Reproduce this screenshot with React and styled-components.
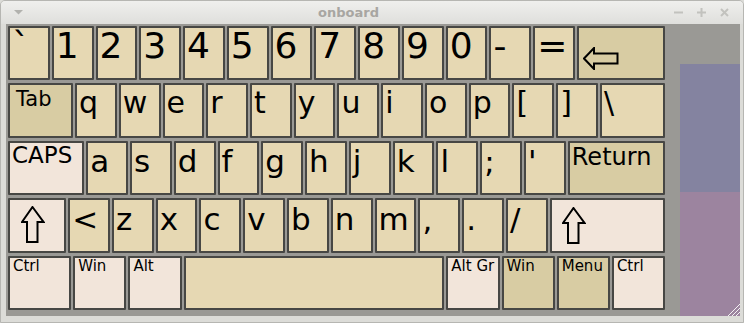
import React from "react";
import styled, { createGlobalStyle } from "styled-components";

const GlobalStyle = createGlobalStyle`
  html, body {
    margin: 0;
    padding: 0;
    background: #dcdcd8;
  }
`;

const tones = {
  base: "#e6d8b3",
  dark: "#d8cca3",
  light: "#f2e5da",
};

const Window = styled.div`
  box-sizing: border-box;
  width: 744px;
  height: 323px;
  display: flex;
  flex-direction: column;
  background: #dcdcd8;
  border: 1px solid #b6b6b2;
  border-radius: 5px 5px 0 0;
  padding: 0 3px 6px 5px;
  font-family: "DejaVu Sans", "Liberation Sans", sans-serif;
  overflow: hidden;
`;

const TitleBar = styled.div`
  height: 23px;
  margin: 0 -3px 0 -5px;
  display: flex;
  align-items: center;
  background: linear-gradient(#efefed, #dfdfdc);
`;

const MenuArea = styled.div`
  width: 37px;
  display: flex;
  align-items: center;
  padding-left: 13px;
  box-sizing: border-box;
`;

const Title = styled.div`
  flex: 1;
  text-align: center;
  font-weight: bold;
  font-size: 13px;
  color: #a8a6a2;
  padding-bottom: 1px;
`;

const Buttons = styled.div`
  width: 84px;
  display: flex;
  align-items: center;
  gap: 14px;
  padding-left: 15px;
  box-sizing: border-box;
`;

const Body = styled.div`
  flex: 1;
  display: flex;
  background: #9a9995;
`;

const Keyboard = styled.div`
  width: 657px;
  margin: 2px 0 6px 2px;
  display: flex;
  flex-direction: column;
  gap: 3px;
`;

const Row = styled.div`
  flex: 1;
  display: flex;
  gap: 2px;
`;

const Key = styled.div`
  flex: ${(p) => p.$w} ${(p) => p.$w} ${(p) => p.$w}px;
  min-width: 0;
  box-sizing: border-box;
  border: 2px solid #474744;
  border-radius: 1px;
  background: ${(p) => tones[p.$tone]};
  padding: ${(p) => p.$pt}px 0 0 ${(p) => p.$pl}px;
  font-size: ${(p) => p.$size}px;
  line-height: 1;
  color: #000;
  overflow: hidden;
  white-space: nowrap;
`;

const SidePanel = styled.div`
  width: 60px;
  margin: 40px 0 0 15px;
  display: flex;
  flex-direction: column;
  position: relative;
`;

const PanelPart = styled.div`
  flex: ${(p) => p.$grow} 1 0;
  background: ${(p) => p.$color};
`;

const Grip = styled.svg`
  position: absolute;
  right: 0;
  bottom: 0;
`;

const BackArrow = () => (
  <svg width="36" height="23" viewBox="0 0 36 23">
    <polygon
      points="1,11.5 11,1 11,6.5 34.5,6.5 34.5,16.5 11,16.5 11,22"
      fill="none"
      stroke="#000"
      strokeWidth="2"
      strokeLinejoin="miter"
    />
  </svg>
);

const ShiftArrow = () => (
  <svg width="24" height="37" viewBox="0 0 24 37">
    <polygon
      points="11.5,1 22.5,16 16.5,16 16.5,36 6,36 6,16 1,16"
      fill="none"
      stroke="#000"
      strokeWidth="2"
    />
  </svg>
);

const U = 41.7;

const chars = (s, size, pt) =>
  s.split(" ").map((c) => ({ label: c, w: U, tone: "base", size, pt, pl: 2 }));

const rows = [
  [
    ...chars("` 1 2 3 4 5 6 7 8 9 0 - =", 36, 0),
    { label: <BackArrow />, w: 88, tone: "dark", pt: 17, pl: 4 },
  ],
  [
    { label: "Tab", w: 65, tone: "dark", size: 21, pt: 4, pl: 6 },
    ...chars("q w e r t y u i o p [ ]", 30, 3),
    { label: "\\", w: 65, tone: "base", size: 30, pt: 3, pl: 2 },
  ],
  [
    { label: "CAPS", w: 76, tone: "light", size: 23, pt: 1, pl: 2 },
    ...chars("a s d f g h j k l ; '", 31, 3),
    { label: "Return", w: 97, tone: "dark", size: 24, pt: 2, pl: 2 },
  ],
  [
    { label: <ShiftArrow />, w: 58, tone: "light", pt: 6, pl: 11 },
    ...chars("< z x c v b n m , . /", 31, 4),
    { label: <ShiftArrow />, w: 115, tone: "light", pt: 7, pl: 10 },
  ],
  [
    { label: "Ctrl", w: 63, tone: "light" },
    { label: "Win", w: 53, tone: "light" },
    { label: "Alt", w: 53, tone: "light" },
    { label: "", w: 260, tone: "base" },
    { label: "Alt Gr", w: 53, tone: "light" },
    { label: "Win", w: 53, tone: "dark" },
    { label: "Menu", w: 53, tone: "dark" },
    { label: "Ctrl", w: 53, tone: "light" },
  ].map((k) => ({ size: 15, pt: 1, pl: 3, ...k })),
];

export default function App() {
  return (
    <>
      <GlobalStyle />
      <Window>
        <TitleBar>
          <MenuArea>
            <svg width="9" height="5" viewBox="0 0 9 5">
              <polygon points="0,0 9,0 4.5,4.5" fill="#b2b2ae" />
            </svg>
          </MenuArea>
          <Title>onboard</Title>
          <Buttons>
            <svg width="9" height="9" viewBox="0 0 9 9">
              <line x1="0" y1="4.5" x2="9" y2="4.5" stroke="#c2c2be" strokeWidth="2" />
            </svg>
            <svg width="9" height="9" viewBox="0 0 9 9">
              <line x1="0" y1="4.5" x2="9" y2="4.5" stroke="#c2c2be" strokeWidth="2" />
              <line x1="4.5" y1="0" x2="4.5" y2="9" stroke="#c2c2be" strokeWidth="2" />
            </svg>
            <svg width="9" height="9" viewBox="0 0 9 9">
              <line x1="1" y1="1" x2="8" y2="8" stroke="#c2c2be" strokeWidth="2" />
              <line x1="8" y1="1" x2="1" y2="8" stroke="#c2c2be" strokeWidth="2" />
            </svg>
          </Buttons>
        </TitleBar>
        <Body>
          <Keyboard>
            {rows.map((row, i) => (
              <Row key={i}>
                {row.map((k, j) => (
                  <Key
                    key={j}
                    $w={k.w}
                    $tone={k.tone}
                    $size={k.size || 30}
                    $pt={k.pt}
                    $pl={k.pl}
                  >
                    {k.label}
                  </Key>
                ))}
              </Row>
            ))}
          </Keyboard>
          <SidePanel>
            <PanelPart $grow={128} $color="#8483a0" />
            <PanelPart $grow={124} $color="#9c849f" />
            <Grip width="14" height="14" viewBox="0 0 14 14">
              <line x1="2" y1="14" x2="14" y2="2" stroke="#f4f2f4" strokeWidth="1" />
              <line x1="6" y1="14" x2="14" y2="6" stroke="#f4f2f4" strokeWidth="1" />
              <line x1="10" y1="14" x2="14" y2="10" stroke="#f4f2f4" strokeWidth="1" />
            </Grip>
          </SidePanel>
        </Body>
      </Window>
    </>
  );
}
